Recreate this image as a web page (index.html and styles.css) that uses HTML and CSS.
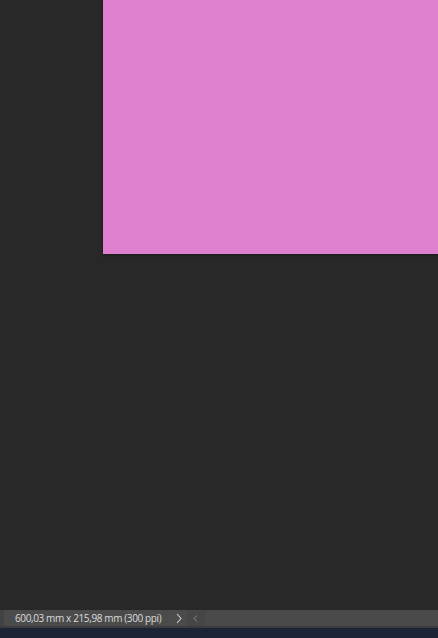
FILE: index.html
```html
<!DOCTYPE html>
<html>
<head>
<meta charset="utf-8">
<link rel="stylesheet" href="styles.css">
</head>
<body>
<div class="app">
  <div class="canvas">
    <div class="artboard"></div>
  </div>
  <div class="status">
    <div class="status-edge"></div>
    <div class="status-info">600,03 mm x 215,98 mm (300 ppi)</div>
    <div class="status-next">
      <svg width="8" height="11" viewBox="0 0 8 11"><path d="M2 1 L6 5.5 L2 10" fill="none" stroke="#cfcfcf" stroke-width="1.1"/></svg>
    </div>
    <div class="status-prev">
      <svg width="8" height="11" viewBox="0 0 8 11"><path d="M5 2.5 L2 5.5 L5 8.5" fill="none" stroke="#8a8a8a" stroke-width="1"/></svg>
    </div>
    <div class="status-fill"></div>
  </div>
  <div class="status-line"></div>
  <div class="taskbar"></div>
</div>
</body>
</html>
```
FILE: styles.css
```css
html, body {
  margin: 0;
  padding: 0;
  background: #282828;
}
.app {
  width: 438px;
  height: 638px;
  display: flex;
  flex-direction: column;
  overflow: hidden;
  font-family: "Open Sans", "Liberation Sans", sans-serif;
}
.canvas {
  flex: 1;
  background: #282828;
  display: flex;
  align-items: flex-start;
}
.artboard {
  margin-left: 103px;
  width: 335px;
  height: 254px;
  background: #df7fd0;
  box-shadow: 0 1px 3px rgba(0,0,0,0.45);
}
.status {
  height: 16px;
  display: flex;
  background: #4a4a4a;
}
.status-edge {
  width: 4px;
  background: #424242;
}
.status-info {
  width: 166px;
  padding-left: 11px;
  box-sizing: border-box;
  font-size: 10px;
  letter-spacing: -0.38px;
  line-height: 16px;
  color: #dcdcdc;
  white-space: nowrap;
  overflow: hidden;
  background: #4b4b4b;
}
.status-next {
  width: 17px;
  display: flex;
  align-items: center;
  justify-content: center;
  background: #4b4b4b;
}
.status-prev {
  width: 18px;
  display: flex;
  align-items: center;
  justify-content: center;
  background: #464646;
}
.status-fill {
  flex: 1;
  background: #4a4a4a;
}
.status-line {
  height: 2px;
  background: #3c3c40;
}
.taskbar {
  height: 10px;
  background: #1b2533;
}
```
